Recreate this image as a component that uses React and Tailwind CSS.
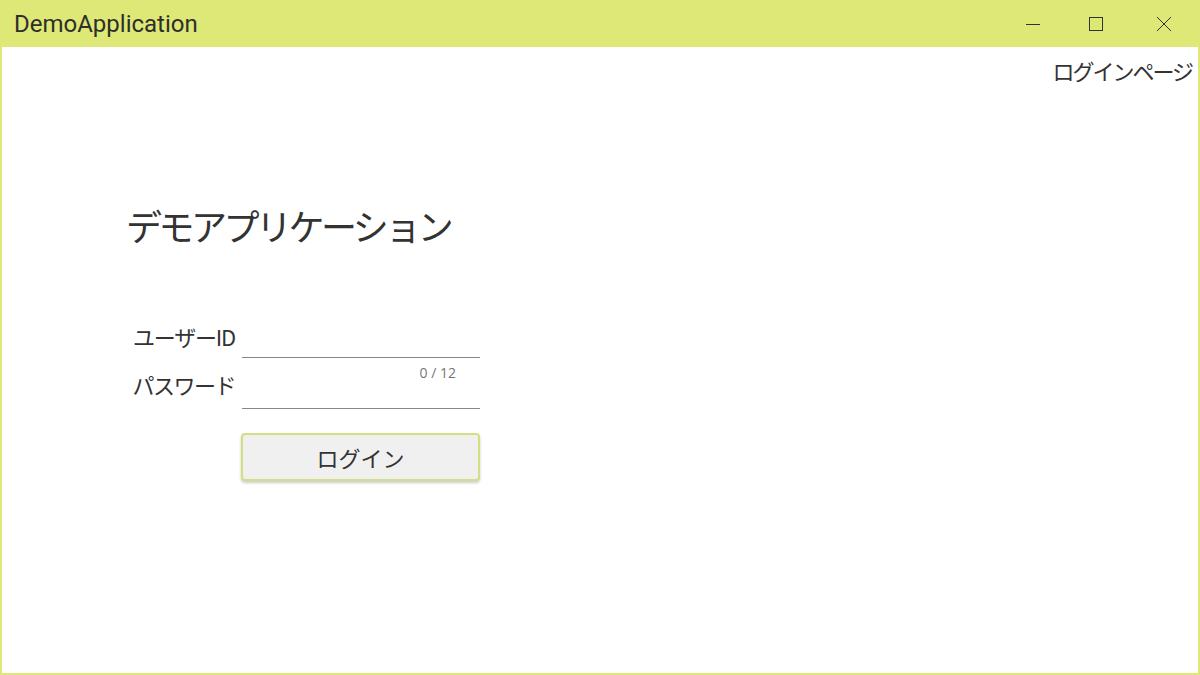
import { useState } from 'react'

const jp = { fontFamily: '"Noto Sans CJK JP", "Noto Sans", sans-serif' }

const App = () => {

    // FORM STATE
    const [userId, setUserId] = useState('')
    const [password, setPassword] = useState('')

    return (
        <div className="flex flex-col w-[1200px] h-[675px] bg-[#dde877]" style={jp}>

            {/* TITLE BAR */}
            <div className="flex items-center h-[47px] shrink-0">
                <span className="pl-[14px] text-[24px] text-[#2f2f2a]" style={{ fontFamily: 'Roboto, sans-serif' }}>DemoApplication</span>
                <div className="ml-auto flex items-center h-full">
                    <div className="w-[46px] h-full flex items-center justify-center mr-[17px]">
                        <svg width="16" height="16" viewBox="0 0 16 16"><path d="M1 8.5h14" stroke="#333" strokeWidth="1" /></svg>
                    </div>
                    <div className="w-[46px] h-full flex items-center justify-center mr-[22px]">
                        <svg width="16" height="16" viewBox="0 0 16 16"><rect x="1.5" y="1.5" width="13" height="13" fill="none" stroke="#333" strokeWidth="1" /></svg>
                    </div>
                    <div className="w-[46px] h-full flex items-center justify-center mr-[13px]">
                        <svg width="16" height="16" viewBox="0 0 16 16"><path d="M1 1L15 15M15 1L1 15" stroke="#333" strokeWidth="1" /></svg>
                    </div>
                </div>
            </div>

            {/* CONTENT */}
            <div className="flex-1 flex flex-col mx-[2px] mb-[2px] bg-white">
                <div className="flex justify-end pr-[6px] pt-[10px]">
                    <span className="text-[22px] leading-[26px] tracking-[-2px] text-[#333]">ログインページ</span>
                </div>

                <div className="flex flex-col pl-[124px] pt-[120px]">
                    <h1 className="text-[36px] leading-[44px] tracking-[-3.5px] text-[#333] font-normal">デモアプリケーション</h1>

                    <div className="grid grid-cols-[109px_238px] gap-x-[7px] mt-[61px]">
                        {/* USER ID */}
                        <label className="flex items-center justify-end h-[50px] pt-[7px] whitespace-nowrap text-[22px] tracking-[-1.2px] text-[#333]">ユーザーID</label>
                        <div className="relative h-[50px] border-b border-[#888]">
                            <input
                                className="w-full h-full outline-none bg-transparent text-[18px]"
                                value={userId}
                                maxLength={12}
                                onChange={(e) => setUserId(e.target.value)}
                            />
                            <span className="absolute right-[24px] top-[54px] text-[14px] text-[#777]" style={{ fontFamily: '"Open Sans", sans-serif' }}>{userId.length} / 12</span>
                        </div>

                        {/* PASSWORD */}
                        <label className="flex items-center justify-end h-[51px] pt-[2px] whitespace-nowrap text-[22px] tracking-[-1.5px] text-[#333]">パスワード</label>
                        <div className="h-[51px] border-b border-[#888]">
                            <input
                                type="password"
                                className="w-full h-full outline-none bg-transparent text-[18px]"
                                value={password}
                                onChange={(e) => setPassword(e.target.value)}
                            />
                        </div>

                        {/* LOGIN BUTTON */}
                        <div />
                        <button className="-ml-[1px] mt-[24px] h-[48px] rounded-[4px] border-2 border-[#d5df82] bg-[#f0f0f0] text-[22px] leading-[26px] text-[#333] shadow-[0_2px_3px_rgba(0,0,0,0.2)]">
                            ログイン
                        </button>
                    </div>
                </div>
            </div>
        </div>
    )
}

export default App
